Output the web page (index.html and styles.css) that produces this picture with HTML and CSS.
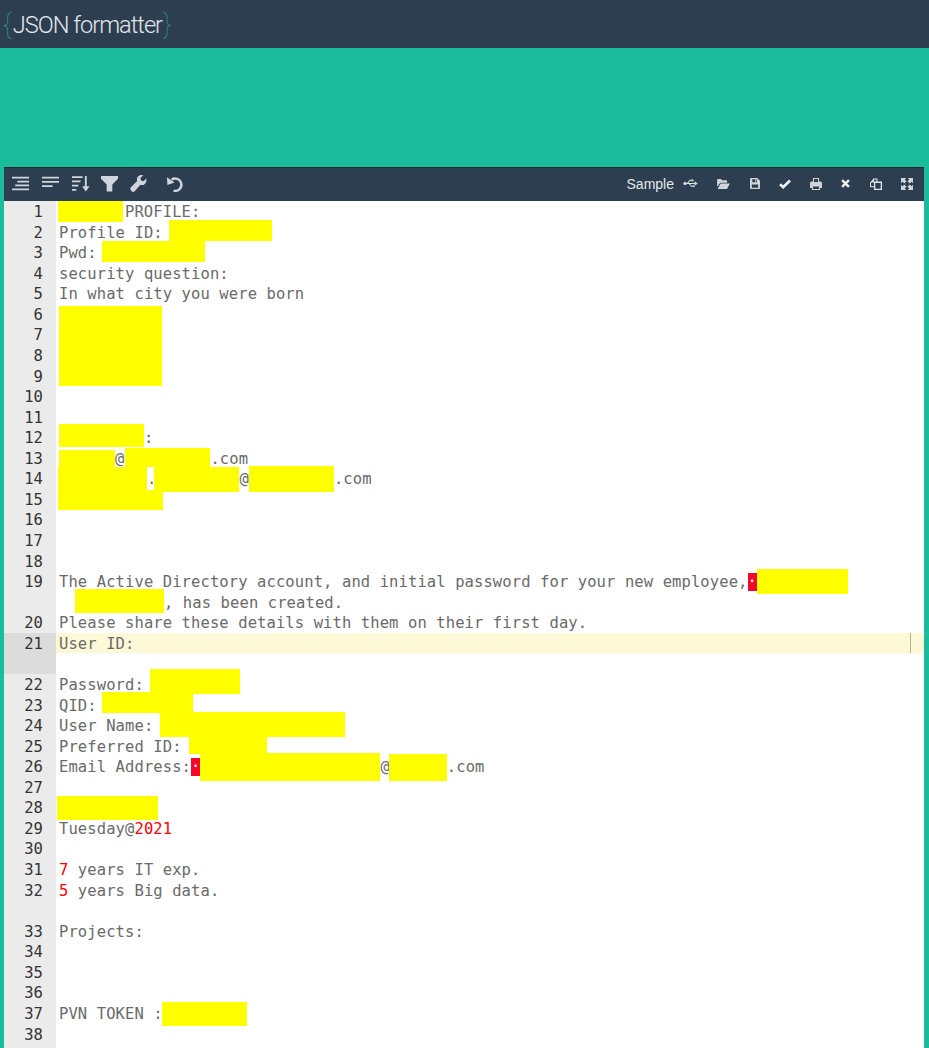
FILE: index.html
```html
<!DOCTYPE html>
<html lang="en">
<head>
<meta charset="utf-8">
<title>JSON formatter</title>
<link rel="stylesheet" href="styles.css">
</head>
<body>
<header class="site-header"><span class="brace">{</span><span class="logo-text">JSON formatter</span><span class="brace">}</span></header>
<main class="stage">
<section class="editor">
<div class="toolbar">
<div class="tool-group">
<span class="btn"><svg viewBox="0 0 16 16"><path class="ln-i" d="M0 2.500h16M5 6.200h11M3 9.800h13M0 13.500h16"/></svg></span>
<span class="btn"><svg viewBox="0 0 16 16"><path class="ln-i" d="M0 2.500h16M0 6.500h16M0 10.500h10"/></svg></span>
<span class="btn"><svg viewBox="0 0 16 16"><path class="ln-i" d="M0 2h10M0 6h8M0 10h6M0 14h4"/><path class="ln-i" d="M13 1v12"/><path class="fill-i" d="M9.500 10.500h7L13 15.500z"/></svg></span>
<span class="btn btn-tight"><svg viewBox="0 0 18 18"><path class="fill-i" d="M0 1h18v3l-6 6v7.500H6V10L0 4z"/></svg></span>
<span class="btn btn-tight"><svg viewBox="0 0 18 18"><path class="fill-i" d="M17.300 3.600l-3 3-2.600-.7-.7-2.600 3-3c-2-.7-4.300-.2-5.500 1.300-1.200 1.300-1.500 3.100-.9 4.700L.9 13a2.300 2.300 0 0 0 0 3.200l.9.9a2.300 2.300 0 0 0 3.200 0l6-6.700c1.600.5 3.400.2 4.700-1 1.500-1.400 2-3.800 1.600-5.800z"/></svg></span>
<span class="btn btn-undo"><svg viewBox="0 0 18 18"><path class="arc-i" d="M6 5A6.500 6.500 0 1 1 8 16.500"/><path class="fill-i" d="M1 2.500l.5 8 7.500-2.500z"/></svg></span>
</div>
<div class="tool-group tool-right">
<span class="sample">Sample</span>
<span class="btn"><svg class="icon-usb" viewBox="0 0 16 12"><path class="thin-i" d="M2 6h12M4.500 6l3-3.500h2M6.500 6l2.500 3h2"/><circle class="fill-i" cx="2" cy="6" r="1.800"/><path class="fill-i" d="M12.500 3.500l3.500 2.500-3.500 2.500z"/><rect class="fill-i" x="9" y="1.500" width="2.200" height="2.200"/><circle class="fill-i" cx="11.500" cy="9" r="1.200"/></svg></span>
<span class="btn shift-2"><svg class="icon-folder" viewBox="0 0 14 11"><path class="fill-i" d="M0 1.200C0 .5.500 0 1.200 0h3l1.200 1.300h4.400c.7 0 1.200.5 1.200 1.200V4H3.500L0 8.500z"/><path class="fill-i" d="M3.800 5H14l-3.200 6H.5z"/></svg></span>
<span class="btn shift-2"><svg class="icon-save" viewBox="0 0 11 12"><path class="fill-i" fill-rule="evenodd" d="M1 0h7l3 3v8a1 1 0 0 1-1 1H1a1 1 0 0 1-1-1V1a1 1 0 0 1 1-1zm1.500 1.200v3.300h5V1.200zM2 7v3.800h7V7z"/><rect class="fill-i" x="5.500" y="1.600" width="1.200" height="2.200"/></svg></span>
<span class="btn shift-1"><svg class="small" viewBox="0 0 12 10"><path class="bold-i" d="M1 5.200l3.200 3L11 1.500"/></svg></span>
<span class="btn shift-1"><svg class="small" viewBox="0 0 12 12"><path class="fill-i" fill-rule="evenodd" d="M3 0h6v3.500h1.500A1.500 1.500 0 0 1 12 5v5h-2v2H2v-2H0V5a1.500 1.500 0 0 1 1.500-1.500H3zm1 1v3h4V1zM3 8.500V11h6V8.500z"/></svg></span>
<span class="btn"><svg class="icon-x" viewBox="0 0 10 10"><path class="bold-i" d="M1.200 1.200l7.600 7.600M8.800 1.200L1.200 8.800"/></svg></span>
<span class="btn shift-back"><svg class="small" viewBox="0 0 13 13"><path class="thin-i" d="M.6 5.200L4 1.200h3.500v3M.6 5.200V9.500H4.500"/><path class="fill-i" d="M1 4.800h3.500V1.200z"/><path class="mid-i" d="M5 4.600h3l4.300 0v7.800H5z"/></svg></span>
<span class="btn shift-back"><svg class="small" viewBox="0 0 12 12"><path class="fill-i" d="M0 0h5.200L3.700 1.500 5.500 3.300 3.300 5.500 1.500 3.700 0 5.200zM12 0v5.200l-1.500-1.500-1.800 1.800-2.200-2.200 1.800-1.800L6.800 0zM0 12V6.800l1.500 1.500 1.800-1.800 2.200 2.200-1.800 1.800L5.200 12zM12 12H6.800l1.500-1.500-1.800-1.800 2.200-2.200 1.800 1.800L12 6.800z"/></svg></span>
</div>
</div>
<div class="code">
<div class="row"><div class="num">1</div><div class="txt"><div class="ln"><i class="mark m1"></i>PROFILE:</div></div></div>
<div class="row"><div class="num">2</div><div class="txt"><div class="ln">Profile ID:<i class="mark m2"></i></div></div></div>
<div class="row"><div class="num">3</div><div class="txt"><div class="ln">Pwd:<i class="mark m3"></i></div></div></div>
<div class="row"><div class="num">4</div><div class="txt"><div class="ln">security question:</div></div></div>
<div class="row"><div class="num">5</div><div class="txt"><div class="ln">In what city you were born</div></div></div>
<div class="row"><div class="num">6</div><div class="txt"><div class="ln"><i class="mark m6"></i></div></div></div>
<div class="row"><div class="num">7</div><div class="txt"><div class="ln"></div></div></div>
<div class="row"><div class="num">8</div><div class="txt"><div class="ln"></div></div></div>
<div class="row"><div class="num">9</div><div class="txt"><div class="ln"></div></div></div>
<div class="row"><div class="num">10</div><div class="txt"><div class="ln"></div></div></div>
<div class="row"><div class="num">11</div><div class="txt"><div class="ln"></div></div></div>
<div class="row"><div class="num">12</div><div class="txt"><div class="ln"><i class="mark m12"></i>:</div></div></div>
<div class="row"><div class="num">13</div><div class="txt"><div class="ln"><i class="mark m13a"></i>@<i class="mark m13b"></i>.com</div></div></div>
<div class="row"><div class="num">14</div><div class="txt"><div class="ln"><i class="mark m14a"></i>.<i class="mark m14b"></i>@<i class="mark m14c"></i>.com</div></div></div>
<div class="row"><div class="num">15</div><div class="txt"><div class="ln"><i class="mark m15"></i></div></div></div>
<div class="row"><div class="num">16</div><div class="txt"><div class="ln"></div></div></div>
<div class="row"><div class="num">17</div><div class="txt"><div class="ln"></div></div></div>
<div class="row"><div class="num">18</div><div class="txt"><div class="ln"></div></div></div>
<div class="row"><div class="num">19</div><div class="txt"><div class="ln">The Active Directory account, and initial password for your new employee,<b class="ctrl c19">·</b><i class="mark m19"></i></div><div class="ln"><i class="mark m19w"></i>, has been created.</div></div></div>
<div class="row"><div class="num">20</div><div class="txt"><div class="ln">Please share these details with them on their first day.</div></div></div>
<div class="row row-active"><div class="num">21</div><div class="txt"><div class="ln ln-active">User ID:<span class="cursor"></span></div><div class="ln"></div></div></div>
<div class="row"><div class="num">22</div><div class="txt"><div class="ln">Password:<i class="mark m22"></i></div></div></div>
<div class="row"><div class="num">23</div><div class="txt"><div class="ln">QID:<i class="mark m23"></i></div></div></div>
<div class="row"><div class="num">24</div><div class="txt"><div class="ln">User Name:<i class="mark m24"></i></div></div></div>
<div class="row"><div class="num">25</div><div class="txt"><div class="ln">Preferred ID:<i class="mark m25"></i></div></div></div>
<div class="row"><div class="num">26</div><div class="txt"><div class="ln">Email Address:<b class="ctrl c26">·</b><i class="mark m26a"></i>@<i class="mark m26b"></i>.com</div></div></div>
<div class="row"><div class="num">27</div><div class="txt"><div class="ln"></div></div></div>
<div class="row"><div class="num">28</div><div class="txt"><div class="ln"><i class="mark m28"></i></div></div></div>
<div class="row"><div class="num">29</div><div class="txt"><div class="ln">Tuesday@<span class="lit">2021</span></div></div></div>
<div class="row"><div class="num">30</div><div class="txt"><div class="ln"></div></div></div>
<div class="row"><div class="num">31</div><div class="txt"><div class="ln"><span class="lit">7</span> years IT exp.</div></div></div>
<div class="row"><div class="num">32</div><div class="txt"><div class="ln"><span class="lit">5</span> years Big data.</div><div class="ln"></div></div></div>
<div class="row"><div class="num">33</div><div class="txt"><div class="ln">Projects:</div></div></div>
<div class="row"><div class="num">34</div><div class="txt"><div class="ln"></div></div></div>
<div class="row"><div class="num">35</div><div class="txt"><div class="ln"></div></div></div>
<div class="row"><div class="num">36</div><div class="txt"><div class="ln"></div></div></div>
<div class="row"><div class="num">37</div><div class="txt"><div class="ln">PVN TOKEN :<i class="mark m37"></i></div></div></div>
<div class="row"><div class="num">38</div><div class="txt"><div class="ln"></div></div></div>
<div class="row row-fill"><div class="num"></div><div class="txt"></div></div>
</div>
</section>
</main>
</body>
</html>
```
FILE: styles.css
```css
* { box-sizing: border-box; }
html, body { margin: 0; height: 100%; overflow: hidden; }
body { display: flex; flex-direction: column; height: 1048px; background: #1abc9c; }

.site-header {
  height: 48px; flex: none; background: #2c3e50; color: #e3e7ea;
  padding: 9px 0 0 3px; font: 300 23.6px/30px Roboto, "Liberation Sans", sans-serif;
  letter-spacing: -1px; white-space: nowrap;
}
.brace { color: #2a9d93; font-weight: 100; font-size: 27px; }
.logo-text { margin: 0 1px 0 2px; }

.stage { flex: 1; min-height: 0; padding: 119px 5px 0 4px; display: flex; }
.editor { flex: 1; min-width: 0; display: flex; flex-direction: column; overflow: hidden; background: #fff; }

.toolbar {
  flex: none; height: 34px; background: #2c3e50; border-top: 1px solid #1b2836;
  display: flex; align-items: center; justify-content: space-between; padding: 0 1px 2px 1px;
}
.tool-group { display: flex; align-items: center; }
.btn { width: 30px; height: 30px; display: flex; align-items: center; justify-content: center; }
.btn svg { width: 17px; height: 17px; display: block; overflow: visible; }
.btn svg.small { width: 12px; height: 12px; }
.btn svg.icon-usb { width: 15px; height: 11px; }
.btn svg.icon-folder { width: 13px; height: 10px; }
.btn svg.icon-save { width: 10px; height: 11px; }
.btn svg.icon-x { width: 9px; height: 9px; }
.btn-tight { margin-left: -1px; }
.btn-undo { margin-left: 6px; }
.ln-i { fill: none; stroke: #cfd5db; stroke-width: 1.8; }
.fill-i { fill: #cfd5db; }
.arc-i { fill: none; stroke: #cfd5db; stroke-width: 2.5; }
.thin-i { fill: none; stroke: #e3e7ea; stroke-width: 1.1; }
.mid-i { fill: #2c3e50; stroke: #e3e7ea; stroke-width: 1.4; }
.bold-i { fill: none; stroke: #f0f2f4; stroke-width: 2.7; }
.tool-right .btn { width: 31px; }
.tool-right .shift-2 { position: relative; left: 2px; }
.tool-right .shift-1 { position: relative; left: 1px; }
.tool-right .shift-back { position: relative; left: -1px; }
.sample { font: 14px/30px "Liberation Sans", sans-serif; color: #e4e8eb; margin-right: 1px; }

.code {
  flex: 1; min-height: 0; overflow: hidden; color: #6a6a6a;
  font: 15.5px/18.57px "DejaVu Sans Mono", monospace; letter-spacing: 0.1px;
}
.row { display: flex; }
.row-fill { height: 40px; }
.num { flex: none; width: 52px; padding: 2px 13px 0 0; text-align: right; background: #ebebeb; color: #333; }
.row-active .num { background: #dcdcdc; }
.txt { flex: 1; min-width: 0; padding-left: 3px; }
.ln { height: 20.57px; padding-top: 2px; white-space: pre; }
.ln-active { background: #fdf9d6; margin-left: -3px; padding-left: 3px; position: relative; }
.cursor { position: absolute; left: 854px; top: 0; width: 1px; height: 20px; background: #b9b38e; }
.lit { color: #f00; }

.mark {
  display: inline-block; vertical-align: top; background: #ff0;
  margin-top: calc(var(--t) - 2px); height: var(--h); margin-bottom: calc(-1 * (var(--h) + var(--t)));
  width: var(--w); margin-left: var(--l, 0);
}
.ctrl {
  display: inline-block; vertical-align: top; background: #f5082a; color: #fff;
  font-weight: 400; width: 9.33px; text-align: center;
  margin-top: 0; height: 18px; line-height: 17px; margin-bottom: -18px;
}

.m1 { --t: -1px; --h: 22px; --w: 65px; --l: -1px; margin-right: 2px; }
.m2 { --t: -2px; --h: 21px; --w: 103px; --l: 6.5px; }
.m3 { --t: -1px; --h: 21px; --w: 103px; --l: 5px; }
.m6 { --t: 2px; --h: 80px; --w: 103px; }
.m12 { --t: -3px; --h: 23px; --w: 85px; }
.m13a { --t: 2px; --h: 18px; --w: 56px; }
.m13b { --t: 0px; --h: 19px; --w: 85px; --l: 1px; }
.m14a { --t: -1px; --h: 25px; --w: 89px; --l: -1px; }
.m14b { --t: -1px; --h: 25px; --w: 85px; --l: -2px; }
.m14c { --t: -2px; --h: 26px; --w: 85px; }
.m15 { --t: 1px; --h: 20px; --w: 105px; --l: -1px; }
.m19 { --t: -2px; --h: 25px; --w: 91px; }
.m19w { --t: -3px; --h: 24px; --w: 89px; --l: 16px; }
.m22 { --t: -5px; --h: 25px; --w: 90px; --l: 6px; }
.m23 { --t: -3px; --h: 21px; --w: 91px; --l: 5px; }
.m24 { --t: -3px; --h: 25px; --w: 185px; --l: 7px; }
.m25 { --t: -3px; --h: 21px; --w: 78px; --l: 7px; }
.m26a { --t: -3px; --h: 28px; --w: 180px; }
.m26b { --t: -2px; --h: 27px; --w: 58px; --l: -1px; }
.m28 { --t: -1.5px; --h: 24px; --w: 101px; --l: -2px; }
.m37 { --t: -1px; --h: 24px; --w: 85px; --l: -1px; }
```
